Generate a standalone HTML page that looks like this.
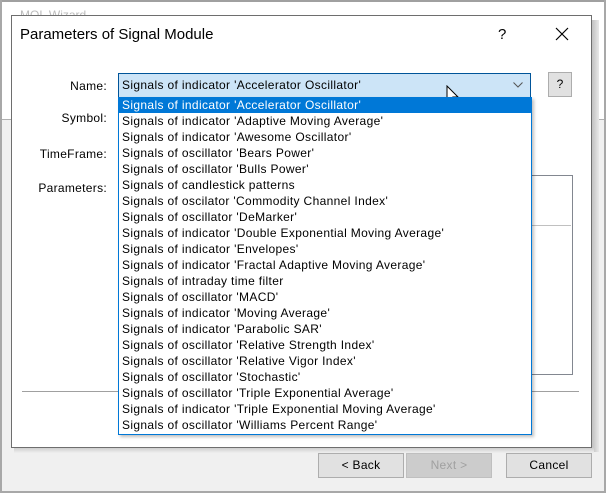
<!DOCTYPE html>
<html><head><style>
*{margin:0;padding:0;box-sizing:border-box}
body{width:606px;height:493px;position:relative;overflow:hidden;background:#f0f0f0;font-family:"Liberation Sans",sans-serif;font-size:12px;color:#000}
.abs{position:absolute}
.lbl{position:absolute;right:499px;text-align:right;font-size:12px;letter-spacing:.3px}
.item{height:16px;line-height:16px;padding-left:3px;white-space:nowrap;letter-spacing:.35px}
.btn{position:absolute;top:453px;height:25px;border:1px solid #adadad;background:#e1e1e1;text-align:center;line-height:23px;font-size:12px;letter-spacing:.3px}
</style></head><body>
<div class="abs" style="left:0;top:0;width:606px;height:120px;background:#fff;border-top:2px solid #a0a0a0"></div>
<div class="abs" style="left:0;top:119px;width:606px;height:1px;background:#b0b0b0"></div>
<div class="abs" style="left:0;top:0;width:2px;height:493px;background:#a8a8a8"></div>
<div class="abs" style="left:604px;top:0;width:2px;height:493px;background:#a8a8a8"></div>
<div class="abs" style="left:0;top:491px;width:606px;height:2px;background:#a8a8a8"></div>
<div class="abs" style="left:20px;top:8px;color:#bbb;font-size:12px">MQL Wizard</div>
<div class="abs" style="left:591px;top:20px;width:8px;height:432px;background:linear-gradient(90deg,#bbb,#e8e8e8)"></div>
<div class="abs" style="left:14px;top:447px;width:580px;height:6px;background:linear-gradient(#c8c8c8,#f0f0f0)"></div>
<div class="abs" style="left:11px;top:15px;width:581px;height:433px;background:#fff;border:1px solid #6e6e6e"></div>
<div class="abs" style="left:20px;top:26px;font-size:15px">Parameters of Signal Module</div>
<div class="abs" style="left:498px;top:26px;font-size:15px">?</div>
<svg class="abs" style="left:555px;top:27px" width="14" height="14"><path d="M1 1L13 13M13 1L1 13" stroke="#000" stroke-width="1.2"/></svg>
<div class="lbl" style="top:79px">Name:</div>
<div class="lbl" style="top:111px">Symbol:</div>
<div class="lbl" style="top:147px">TimeFrame:</div>
<div class="lbl" style="top:181px">Parameters:</div>
<div class="abs" style="left:531px;top:175px;width:42px;height:200px;border:1px solid #828790;border-left:none"></div>
<div class="abs" style="left:531px;top:225px;width:40px;height:1px;background:#c0c0c0"></div>
<div class="abs" style="left:22px;top:391px;width:557px;height:1px;background:#a0a0a0"></div>
<div class="abs" style="left:118px;top:73px;width:413px;height:25px;background:#cce4f7;border:1px solid #005499;line-height:23px;padding-left:3px;font-size:12px;letter-spacing:.35px">Signals of indicator 'Accelerator Oscillator'</div>
<svg class="abs" style="left:513px;top:82px" width="10" height="6"><path d="M0.5 0.5L5 5L9.5 0.5" stroke="#555" fill="none"/></svg>
<div class="abs" style="left:548px;top:72px;width:24px;height:25px;background:#e1e1e1;border:1px solid #adadad;text-align:center;line-height:23px">?</div>
<svg class="abs" style="left:446px;top:85px" width="14" height="22"><path d="M1 1L1 17L5 13L8 20L10 19L7 12L12 12Z" fill="#fff" stroke="#000"/></svg>
<div class="abs" style="left:118px;top:97px;width:414px;height:338px;background:#fff;border:1px solid #0078d7;border-top:none;box-shadow:2px 2px 3px rgba(0,0,0,.25);font-size:12px">
<div class="item" style="background:#0078d7;color:#fff">Signals of indicator 'Accelerator Oscillator'</div>
<div class="item">Signals of indicator 'Adaptive Moving Average'</div>
<div class="item">Signals of indicator 'Awesome Oscillator'</div>
<div class="item">Signals of oscillator 'Bears Power'</div>
<div class="item">Signals of oscillator 'Bulls Power'</div>
<div class="item">Signals of candlestick patterns</div>
<div class="item">Signals of oscilator 'Commodity Channel Index'</div>
<div class="item">Signals of oscillator 'DeMarker'</div>
<div class="item">Signals of indicator 'Double Exponential Moving Average'</div>
<div class="item">Signals of indicator 'Envelopes'</div>
<div class="item">Signals of indicator 'Fractal Adaptive Moving Average'</div>
<div class="item">Signals of intraday time filter</div>
<div class="item">Signals of oscillator 'MACD'</div>
<div class="item">Signals of indicator 'Moving Average'</div>
<div class="item">Signals of indicator 'Parabolic SAR'</div>
<div class="item">Signals of oscillator 'Relative Strength Index'</div>
<div class="item">Signals of oscillator 'Relative Vigor Index'</div>
<div class="item">Signals of oscillator 'Stochastic'</div>
<div class="item">Signals of oscillator 'Triple Exponential Average'</div>
<div class="item">Signals of indicator 'Triple Exponential Moving Average'</div>
<div class="item">Signals of oscillator 'Williams Percent Range'</div>
</div>
<div class="btn" style="left:318px;width:86px">&lt; Back</div>
<div class="btn" style="left:406px;width:86px;color:#a0a0a0;background:#ccc;border-color:#bfbfbf">Next &gt;</div>
<div class="btn" style="left:506px;width:86px">Cancel</div>
</body></html>
